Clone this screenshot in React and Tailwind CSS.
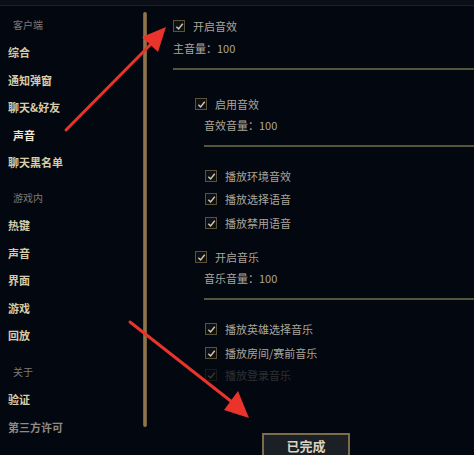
const font = { fontFamily: '"Noto Sans CJK SC", "Noto Sans", sans-serif' }

const sidebar = [
  { label: '客户端', kind: 'head' },
  { label: '综合' },
  { label: '通知弹窗' },
  { label: '聊天&好友' },
  { label: '声音', kind: 'active' },
  { label: '聊天黑名单' },
  { kind: 'gap', cls: 'h-[8px]' },
  { label: '游戏内', kind: 'head' },
  { label: '热键' },
  { label: '声音' },
  { label: '界面' },
  { label: '游戏' },
  { label: '回放' },
  { kind: 'gap', cls: 'h-[9px]' },
  { label: '关于', kind: 'head' },
  { label: '验证' },
  { label: '第三方许可', kind: 'dim' },
]

function Check() {
  return (
    <span className="w-[12px] h-[12px] shrink-0 border border-[#5e5236] bg-[#0d1014] flex items-center justify-center">
      <svg width="9" height="9" viewBox="0 0 10 10">
        <polyline points="1.5,5.2 4,7.6 8.6,2" fill="none" stroke="#cfc8b2" strokeWidth="1.6" />
      </svg>
    </span>
  )
}

function CheckRow({ label, className = '' }) {
  return (
    <div className={`flex items-center h-[12px] ${className}`}>
      <Check />
      <span className="ml-[8px] text-[11px] leading-[12px] text-[#a9a69c]">{label}</span>
    </div>
  )
}

function Divider({ className = '' }) {
  return <div className={`h-[2px] bg-[#56543f] ${className}`} />
}

function Arrows() {
  return (
    <svg className="absolute inset-0 pointer-events-none" width="474" height="455">
      <line x1="66" y1="130" x2="152" y2="43" stroke="#e9332b" strokeWidth="3" strokeLinecap="round" />
      <polygon points="166,27 158,52 142,37" fill="#e9332b" />
      <line x1="130" y1="322" x2="232" y2="402" stroke="#e9332b" strokeWidth="3" strokeLinecap="round" />
      <polygon points="249,418 224,410 238,391" fill="#e9332b" />
    </svg>
  )
}

export default function App() {
  return (
    <div className="relative w-[474px] h-[455px] overflow-hidden bg-[#03070f]" style={font}>
      <div className="h-[6px] bg-[#0a0e17] border-b border-[#1b212b]" />

      <div className="flex">
        {/* sidebar */}
        <div className="w-[143px] pt-[5px] flex flex-col">
          {sidebar.map((it, i) => {
            if (it.kind === 'gap') return <div key={i} className={it.cls} />
            if (it.kind === 'head')
              return (
                <div key={i} className="h-[27.5px] flex items-center pl-[13px] text-[10px] text-[#7b7b79]">
                  {it.label}
                </div>
              )
            if (it.kind === 'active')
              return (
                <div key={i} className="h-[27.5px] flex items-center pl-[13px] text-[11px] font-bold text-[#f0e8d6]">
                  {it.label}
                </div>
              )
            if (it.kind === 'dim')
              return (
                <div key={i} className="h-[27.5px] flex items-center pl-[8px] text-[11px] font-semibold text-[#8d8b85]">
                  {it.label}
                </div>
              )
            return (
              <div key={i} className="h-[27.5px] flex items-center pl-[8px] text-[11px] font-bold text-[#d6cca9]">
                {it.label}
              </div>
            )
          })}
        </div>

        {/* scrollbar */}
        <div className="w-[4px] h-[415px] mt-[6px] rounded-full bg-gradient-to-r from-[#6c5634] via-[#9a7f52] to-[#6c5634]" />

        {/* content */}
        <div className="flex-1 flex flex-col pl-[26px]">
          <CheckRow label="开启音效" className="mt-[14px]" />
          <div className="mt-[9px] text-[11px] leading-[14px] text-[#a9a69c]">主音量：100</div>
          <Divider className="mt-[13px]" />

          <div className="pl-[22px] flex flex-col">
            <CheckRow label="启用音效" className="mt-[28px]" />
            <div className="mt-[8px] pl-[9px] text-[11px] leading-[14px] text-[#a9a69c]">音效音量：100</div>
            <Divider className="mt-[13px] ml-[9px]" />

            <div className="pl-[10px] flex flex-col">
              <CheckRow label="播放环境音效" className="mt-[23px]" />
              <CheckRow label="播放选择语音" className="mt-[11px]" />
              <CheckRow label="播放禁用语音" className="mt-[12px]" />
            </div>

            <CheckRow label="开启音乐" className="mt-[22px]" />
            <div className="mt-[8px] pl-[9px] text-[11px] leading-[14px] text-[#a9a69c]">音乐音量：100</div>
            <Divider className="mt-[13px] ml-[9px]" />

            <div className="pl-[10px] flex flex-col">
              <CheckRow label="播放英雄选择音乐" className="mt-[23px]" />
              <CheckRow label="播放房间/赛前音乐" className="mt-[12px]" />
              <CheckRow label="播放登录音乐" className="mt-[10px] opacity-25" />
            </div>
          </div>

          <div className="mt-[52px] ml-[89px] w-[88px] h-[32px] border-2 border-[#7d6c4c] bg-[#1b2026] flex items-center justify-center">
            <span className="text-[13px] font-bold text-[#d9d3c0] -mt-[6px]">已完成</span>
          </div>
        </div>
      </div>

      <Arrows />
    </div>
  )
}
